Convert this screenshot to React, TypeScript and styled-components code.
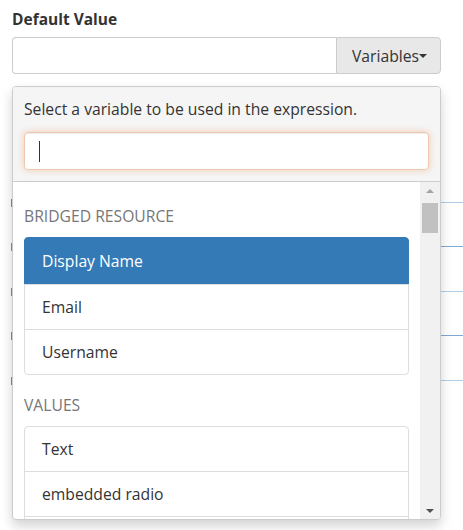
import React from 'react'
import styled, { createGlobalStyle } from 'styled-components'

const GlobalStyle = createGlobalStyle`
  html, body {
    margin: 0;
    padding: 0;
    background: #fff;
  }
  body {
    font-family: 'Open Sans', 'Noto Sans', sans-serif;
    color: #333;
    overflow: hidden;
  }
  * {
    box-sizing: border-box;
  }
`

const Page = styled.div`
  position: relative;
  width: 463px;
  height: 530px;
  padding: 0 22px 0 12px;
`

const Label = styled.div`
  padding-top: 9px;
  font-size: 15.5px;
  line-height: 20px;
  font-weight: 700;
  color: #333;
`

const InputGroup = styled.div`
  display: flex;
  margin-top: 8px;
  width: 429px;
  height: 37px;
`

const TextField = styled.div`
  flex: 1;
  border: 1px solid #ccc;
  border-right: none;
  border-radius: 4px 0 0 4px;
  background: #fff;
`

const AddonButton = styled.div`
  display: flex;
  align-items: center;
  justify-content: center;
  width: 105px;
  border: 1px solid #ccc;
  border-radius: 0 4px 4px 0;
  background: #e8e8e8;
  font-size: 15.7px;
  color: #333;
  padding-left: 2px;
`

const Caret = styled.span<{ $color?: string; $up?: boolean }>`
  display: inline-block;
  width: 0;
  height: 0;
  border-left: 4px solid transparent;
  border-right: 4px solid transparent;
  ${p => (p.$up ? 'border-bottom' : 'border-top')}: 4px solid ${p => p.$color || '#333'};
`

const Backdrop = styled.div`
  margin-top: 84px;
  margin-left: -12px;
  margin-right: -22px;
`

const BackdropRow = styled.div`
  display: flex;
  align-items: flex-end;
  height: 44.5px;
`

const Tick = styled.span`
  width: 1px;
  height: 8px;
  margin-left: 11px;
  margin-bottom: -4px;
  background: #9a8582;
`

const RowLine = styled.span<{ $dark?: boolean }>`
  flex: 1;
  margin-left: 20px;
  border-bottom: 1px solid ${p => (p.$dark ? '#7fa9d4' : '#aecbe8')};
`

const Dropdown = styled.div`
  position: absolute;
  top: 86px;
  left: 12px;
  width: 429px;
  height: 434px;
  display: flex;
  flex-direction: column;
  border: 1px solid #ccc;
  border-radius: 4px;
  background: #fff;
  box-shadow: 0 6px 12px rgba(0, 0, 0, 0.175);
  overflow: hidden;
`

const DropdownHeader = styled.div`
  padding: 12px 11px 11px 11px;
  background: #f5f5f5;
  border-bottom: 1px solid #ccc;
`

const Hint = styled.div`
  font-size: 15.7px;
  line-height: 21px;
  color: #333;
`

const SearchBox = styled.div`
  display: flex;
  align-items: center;
  margin-top: 12px;
  height: 38px;
  padding-left: 14px;
  background: #fff;
  border: 1px solid #f0c8ae;
  border-radius: 4px;
  box-shadow: inset 0 1px 1px rgba(0, 0, 0, 0.075), 0 0 7px rgba(232, 150, 96, 0.45);
`

const TextCursor = styled.span`
  width: 1px;
  height: 21px;
  background: #333;
`

const ListArea = styled.div`
  flex: 1;
  display: flex;
  min-height: 0;
`

const ListViewport = styled.div`
  flex: 1;
  overflow: hidden;
  padding: 3px 11px 0 11px;
`

const SectionTitle = styled.div`
  margin: 20px 0 10px;
  font-size: 15.7px;
  line-height: 22px;
  color: #777;
  text-transform: uppercase;

  & ~ & {
    margin-top: 19px;
  }
`

const ListGroup = styled.div`
  display: flex;
  flex-direction: column;
`

const ListItem = styled.div<{ $active?: boolean }>`
  padding: ${p => (p.$active ? '12px 17px' : '11px 17px')};
  margin-bottom: -1px;
  font-size: 15.7px;
  line-height: 22px;
  color: ${p => (p.$active ? '#fff' : '#333')};
  background: ${p => (p.$active ? '#337ab7' : '#fff')};
  border: 1px solid ${p => (p.$active ? '#337ab7' : '#ddd')};

  &:first-child {
    border-radius: 4px 4px 0 0;
  }
  &:last-child {
    border-radius: 0 0 4px 4px;
    margin-bottom: 0;
  }
`

const ScrollTrack = styled.div`
  width: 20px;
  display: flex;
  flex-direction: column;
  align-items: center;
  background: #f1f1f1;
`

const ScrollButton = styled.div`
  height: 17px;
  width: 100%;
  display: flex;
  align-items: center;
  justify-content: center;
`

const ScrollThumb = styled.div`
  margin-top: 4px;
  width: 16px;
  height: 30px;
  background: #c1c1c1;
`

const ScrollSpacer = styled.div`
  flex: 1;
`

const sections = [
  {
    title: 'Bridged Resource',
    items: ['Display Name', 'Email', 'Username'],
    active: 0,
  },
  {
    title: 'Values',
    items: ['Text', 'embedded radio', 'Number'],
    active: -1,
  },
]

const backdropRows = [false, true, false, true, false]

const App: React.FC = () => (
  <Page>
    <GlobalStyle />
    <Label>Default Value</Label>
    <InputGroup>
      <TextField />
      <AddonButton>
        Variables
        <Caret />
      </AddonButton>
    </InputGroup>
    <Backdrop>
      {backdropRows.map((dark, i) => (
        <BackdropRow key={i}>
          <Tick />
          <RowLine $dark={dark} />
        </BackdropRow>
      ))}
    </Backdrop>
    <Dropdown>
      <DropdownHeader>
        <Hint>Select a variable to be used in the expression.</Hint>
        <SearchBox>
          <TextCursor />
        </SearchBox>
      </DropdownHeader>
      <ListArea>
        <ListViewport>
          {sections.map(section => (
            <React.Fragment key={section.title}>
              <SectionTitle>{section.title}</SectionTitle>
              <ListGroup>
                {section.items.map((item, i) => (
                  <ListItem key={item} $active={i === section.active}>
                    {item}
                  </ListItem>
                ))}
              </ListGroup>
            </React.Fragment>
          ))}
        </ListViewport>
        <ScrollTrack>
          <ScrollButton>
            <Caret $up $color='#a3a3a3' />
          </ScrollButton>
          <ScrollThumb />
          <ScrollSpacer />
          <ScrollButton>
            <Caret $color='#505050' />
          </ScrollButton>
        </ScrollTrack>
      </ListArea>
    </Dropdown>
  </Page>
)

export default App
